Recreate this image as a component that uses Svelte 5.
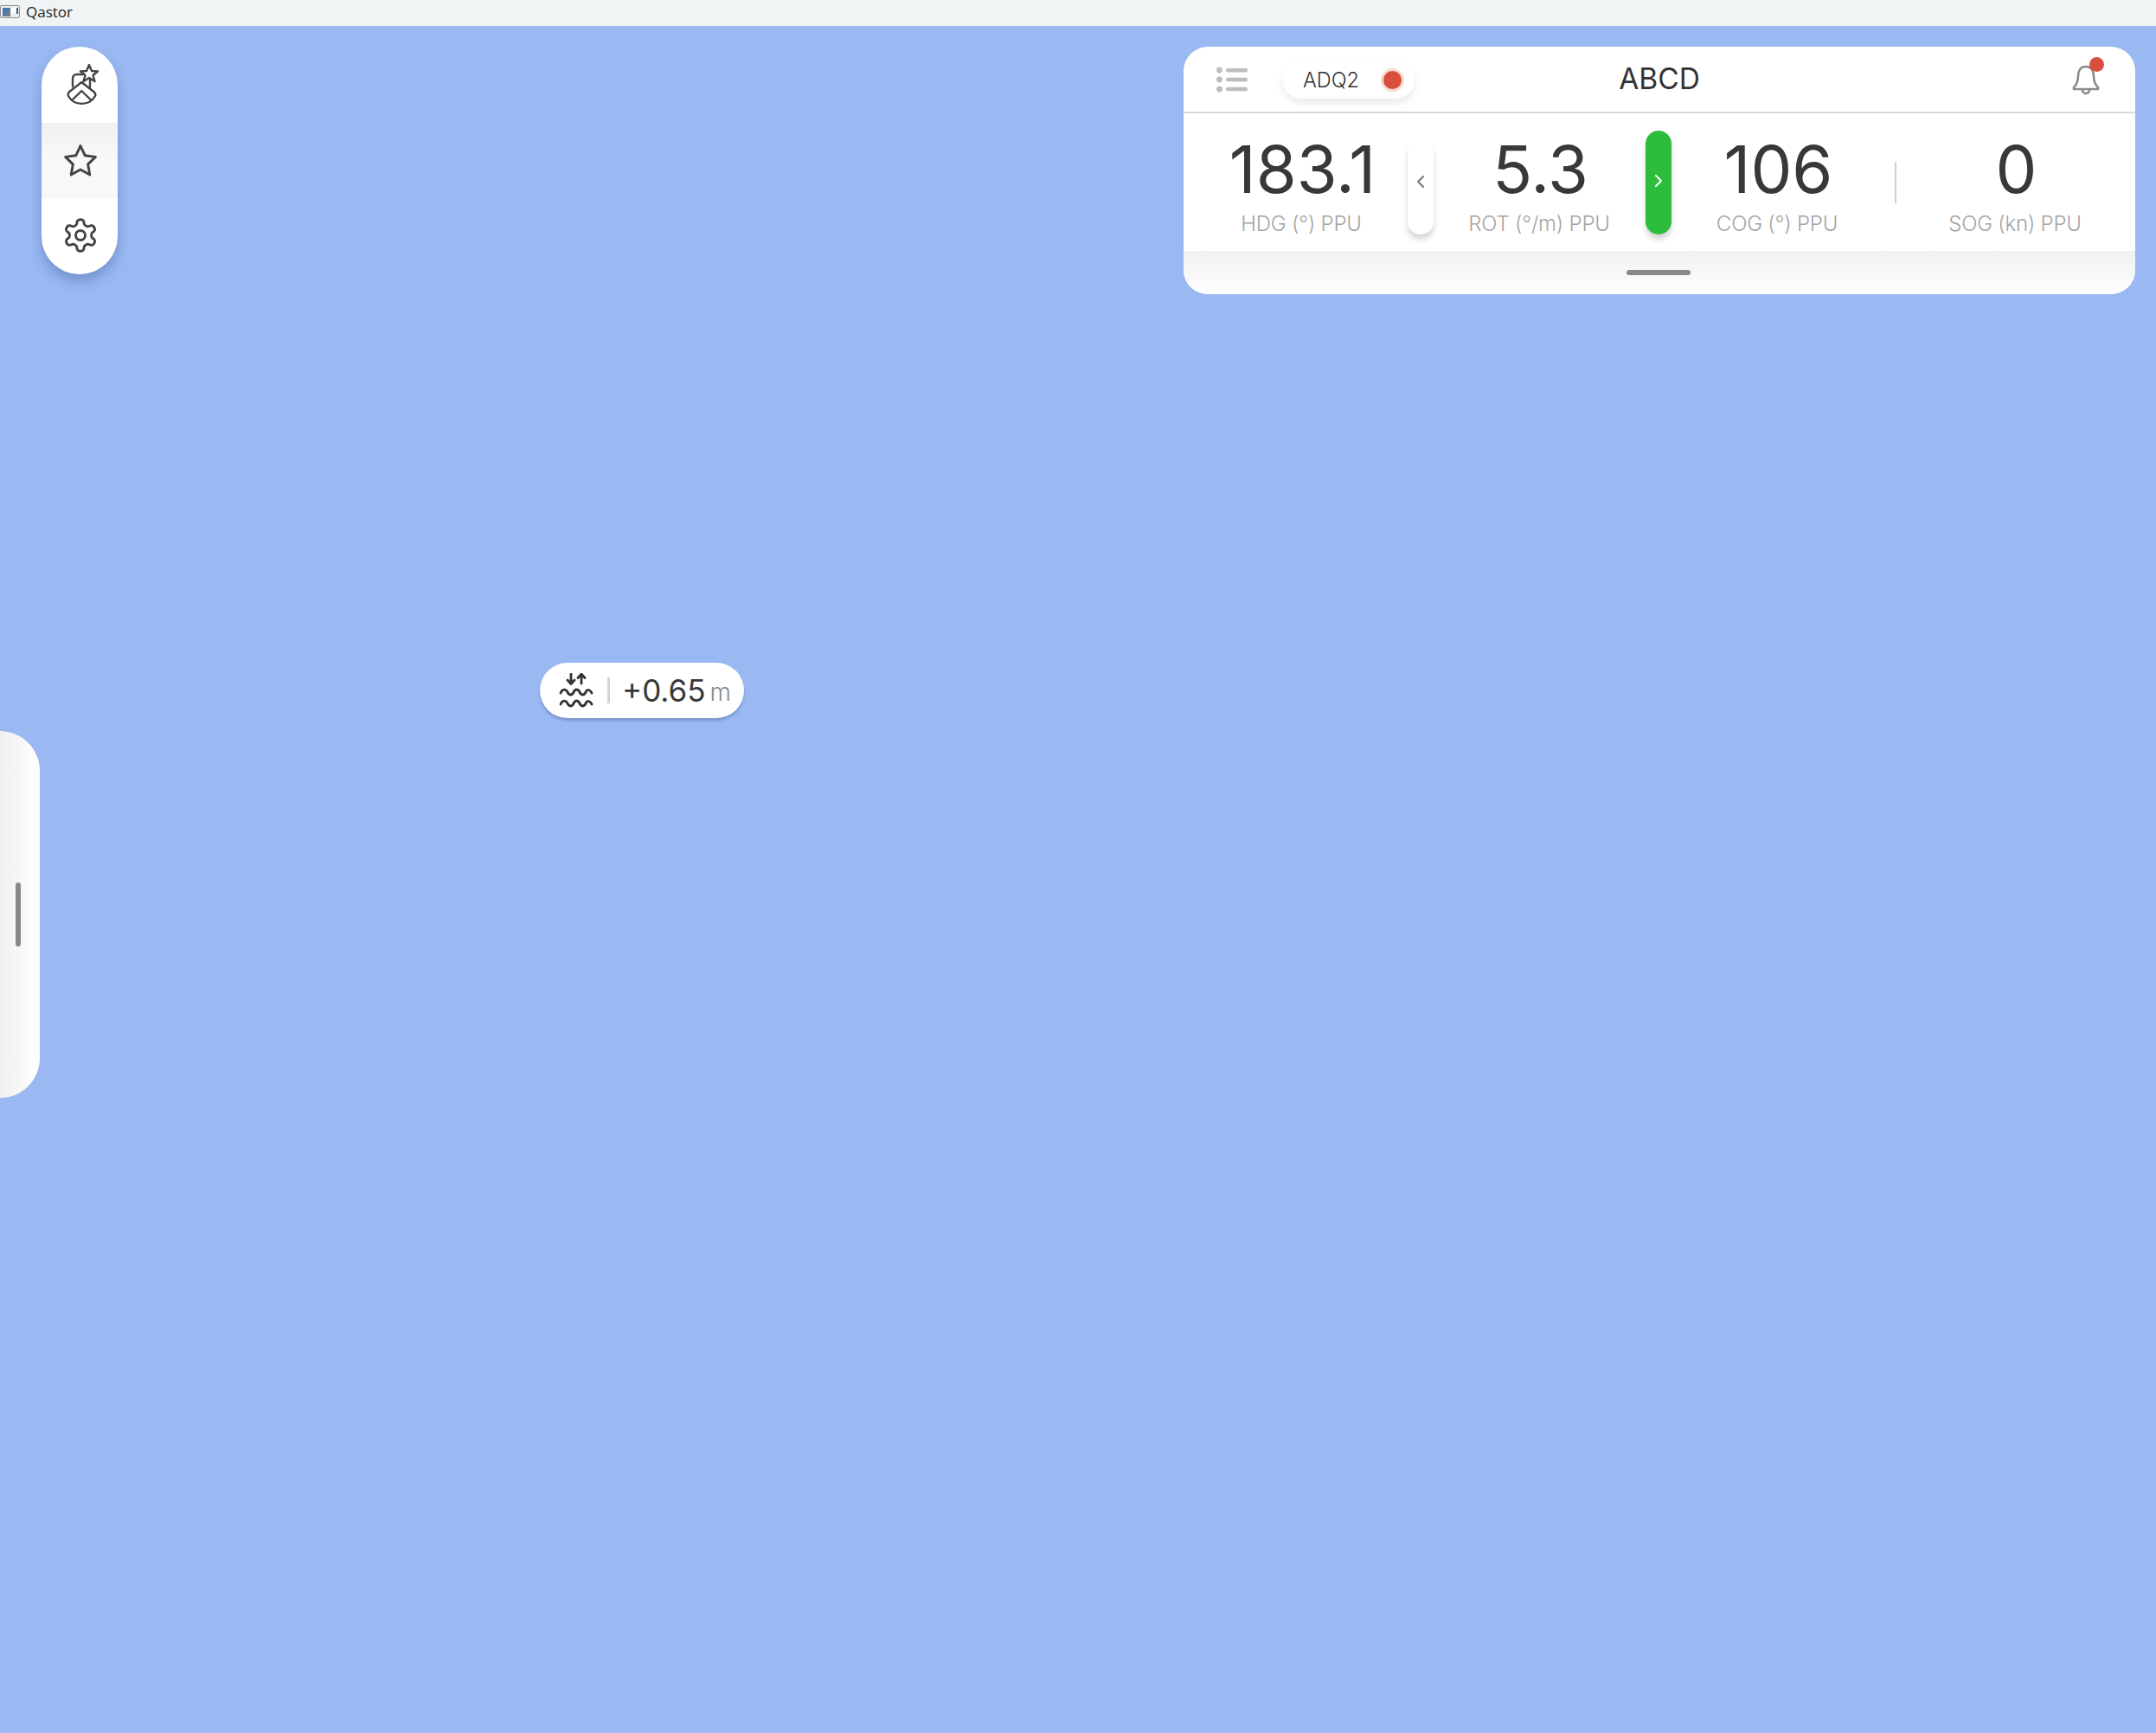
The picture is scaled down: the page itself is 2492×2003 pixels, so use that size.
<script>
  const metrics = [
    { value: '183.1', label: 'HDG (°) PPU', sep: 'left' },
    { value: '5.3', label: 'ROT (°/m) PPU', sep: 'right' },
    { value: '106', label: 'COG (°) PPU', sep: 'line' },
    { value: '0', label: 'SOG (kn) PPU', sep: null }
  ];
</script>

<div class="window">
  <header class="titlebar">
    <svg class="appicon" viewBox="0 0 23 15" width="23" height="15">
      <rect x="0.5" y="0.5" width="22" height="14" rx="1.5" fill="#eee" stroke="#8f8f8f" />
      <rect x="3" y="3" width="9" height="10" fill="#4a78a8" />
      <path d="M3 13 L12 5 V13 Z" fill="#6d7f8f" />
      <rect x="13" y="3" width="5" height="6" fill="#fff" />
      <rect x="19" y="3" width="2" height="7" fill="#445a78" />
    </svg>
    <span>Qastor</span>
  </header>

  <main class="stage">
    <nav class="rail">
      <button class="rail-item" aria-label="Ship">
        <svg viewBox="0 0 44 52" width="44" height="52" fill="none" stroke="#444" stroke-width="2.4" stroke-linejoin="round" stroke-linecap="round">
          <path d="M13 28 V19 Q13 14 18 14 H25" />
          <path d="M33 20 V29" />
          <path d="M23.3 23 L38 34.5 Q40 37 39 39 A18 18 0 0 1 8 39 Q7 37 8.6 34.5 Z" fill="#fff" />
          <path d="M13 43 L23.3 33 L33.5 43" />
          <path d="M32 3 L35 10 L42 10.5 L36.5 15 L38.5 22 L32 18 L25.5 22 L27.5 15 L22 10.5 L29 10 Z" fill="#fff" />
        </svg>
      </button>
      <button class="rail-item active" aria-label="Favourites">
        <svg viewBox="0 0 24 24" width="44" height="44" fill="none" stroke="#444" stroke-width="1.6" stroke-linejoin="round">
          <path d="M12 2.5 L14.9 8.6 L21.5 9.5 L16.7 14.1 L17.9 20.7 L12 17.5 L6.1 20.7 L7.3 14.1 L2.5 9.5 L9.1 8.6 Z" />
        </svg>
      </button>
      <button class="rail-item gear" aria-label="Settings">
        <svg viewBox="0 0 24 24" width="44" height="44" fill="none" stroke="#444" stroke-width="1.6" stroke-linecap="round" stroke-linejoin="round">
          <path d="M12.22 2h-.44a2 2 0 0 0-2 2v.18a2 2 0 0 1-1 1.73l-.43.25a2 2 0 0 1-2 0l-.15-.08a2 2 0 0 0-2.73.73l-.22.38a2 2 0 0 0 .73 2.73l.15.1a2 2 0 0 1 1 1.72v.51a2 2 0 0 1-1 1.74l-.15.09a2 2 0 0 0-.73 2.73l.22.38a2 2 0 0 0 2.73.73l.15-.08a2 2 0 0 1 2 0l.43.25a2 2 0 0 1 1 1.73V20a2 2 0 0 0 2 2h.44a2 2 0 0 0 2-2v-.18a2 2 0 0 1 1-1.73l.43-.25a2 2 0 0 1 2 0l.15.08a2 2 0 0 0 2.73-.73l.22-.39a2 2 0 0 0-.73-2.73l-.15-.08a2 2 0 0 1-1-1.74v-.5a2 2 0 0 1 1-1.74l.15-.09a2 2 0 0 0 .73-2.73l-.22-.38a2 2 0 0 0-2.73-.73l-.15.08a2 2 0 0 1-2 0l-.43-.25a2 2 0 0 1-1-1.73V4a2 2 0 0 0-2-2z" />
          <circle cx="12" cy="12" r="3" />
        </svg>
      </button>
    </nav>

    <aside class="drawer"><span class="drawer-handle"></span></aside>

    <div class="tide">
      <svg viewBox="0 0 40 40" width="40" height="40" fill="none" stroke="#333" stroke-width="2.8" stroke-linecap="round" stroke-linejoin="round">
        <path d="M14 1 V12 M10 8 L14 12.5 L18 8" />
        <path d="M26 12 V1 M22 5.5 L26 1 L30 5.5" />
        <path d="M2 23 C4 18 8 18 10 22 C12 26 15 26 17 22 C19 18 22 18 24 22 C26 26 29 26 31 22 C33 18 36 19 38 23" />
        <path d="M2 36 C4 31 8 31 10 35 C12 39 15 39 17 35 C19 31 22 31 24 35 C26 39 29 39 31 35 C33 31 36 32 38 36" />
      </svg>
      <span class="tide-sep"></span>
      <span class="tide-value">+0.65</span>
      <span class="tide-unit">m</span>
    </div>

    <section class="panel">
      <div class="panel-head">
        <svg class="menu" viewBox="0 0 36 30" width="36" height="30" fill="#bdbdbd">
          <circle cx="3.5" cy="4" r="3.4" /><circle cx="3.5" cy="15" r="3.4" /><circle cx="3.5" cy="26" r="3.4" />
          <rect x="11" y="2" width="25" height="4.5" rx="2" /><rect x="11" y="12.8" width="25" height="4.5" rx="2" /><rect x="11" y="23.8" width="25" height="4.5" rx="2" />
        </svg>
        <div class="adq">
          <span>ADQ2</span>
          <i class="rec"></i>
        </div>
        <h1>ABCD</h1>
        <div class="bell">
          <svg viewBox="0 0 32 36" width="32" height="36" fill="none" stroke="#8a8a8a" stroke-width="2.6" stroke-linejoin="round">
            <path d="M16 3 C9 3 7 9 7 14 C7 21 5 24 2 27 V29 H30 V27 C27 24 25 21 25 14 C25 9 23 3 16 3 Z" />
            <path d="M12 30 A4 4 0 0 0 20 30" />
          </svg>
          <i class="bell-dot"></i>
        </div>
      </div>

      <div class="panel-body">
        {#each metrics as m}
          <div class="metric">
            <div class="value">{m.value}</div>
            <div class="label">{m.label}</div>
            {#if m.sep === 'left'}
              <button class="pill" aria-label="Previous">
                <svg viewBox="0 0 10 16" width="10" height="16" fill="none" stroke="#777" stroke-width="2" stroke-linecap="round" stroke-linejoin="round"><path d="M8 2 L2 8 L8 14" /></svg>
              </button>
            {:else if m.sep === 'right'}
              <button class="pill green" aria-label="Next">
                <svg viewBox="0 0 10 16" width="10" height="16" fill="none" stroke="#fff" stroke-width="2" stroke-linecap="round" stroke-linejoin="round"><path d="M2 2 L8 8 L2 14" /></svg>
              </button>
            {:else if m.sep === 'line'}
              <span class="vline"></span>
            {/if}
          </div>
        {/each}
      </div>

      <div class="panel-foot"><span class="foot-handle"></span></div>
    </section>
  </main>
</div>

<style>
  :global(body) { margin: 0; background: #9ab8f1; }
  .window { width: 2492px; height: 2003px; display: flex; flex-direction: column; overflow: hidden; font-family: Inter, Roboto, "Liberation Sans", sans-serif; }
  .titlebar { height: 30px; flex: none; background: #f0f4f5; display: flex; align-items: center; gap: 7px; font: 17px "Open Sans", "Noto Sans", sans-serif; color: #222; }
  .titlebar span { margin-top: -4px; }
  .appicon { flex: none; margin-top: -4px; }
  .stage { position: relative; flex: 1; background: #9ab8f1; }

  button { border: 0; padding: 0; background: none; display: flex; align-items: center; justify-content: center; }

  .rail { position: absolute; left: 48px; top: 24px; width: 88px; height: 263px; display: flex; flex-direction: column; background: #fff; border-radius: 44px; overflow: hidden; box-shadow: 0 8px 14px rgba(60, 90, 150, 0.4); }
  .rail-item { flex: none; height: 87.67px; box-sizing: border-box; padding-left: 1px; }
  .rail-item.gear { padding-bottom: 2px; }
  .rail-item.active { background: linear-gradient(#f0f0f0, #f8f8f8 50%); padding-top: 2px; }

  .drawer { position: absolute; left: 0; top: 815px; width: 46px; height: 424px; display: flex; align-items: center; justify-content: flex-end; padding-right: 22px; box-sizing: border-box; background: linear-gradient(90deg, #f0f0f0, #fff); border-radius: 0 46px 46px 0; }
  .drawer-handle { width: 6px; height: 74px; border-radius: 3px; background: #888; }

  .tide { position: absolute; left: 624px; top: 736px; width: 236px; height: 64px; box-sizing: border-box; padding-left: 22px; display: flex; align-items: center; background: #fff; border-radius: 32px; box-shadow: 0 3px 3px rgba(60, 90, 150, 0.35); }
  .tide-sep { width: 3px; height: 30px; background: #d4d4d4; margin: 0 14px 0 16px; }
  .tide-value { font-size: 35px; color: #383838; font-weight: 400; }
  .tide-unit { font-size: 28px; color: #8a8a8a; margin-left: 5px; margin-top: 3px; font-weight: 300; }

  .panel { position: absolute; left: 1368px; top: 24px; width: 1100px; height: 286px; display: flex; flex-direction: column; background: #fff; border-radius: 28px; overflow: hidden; }
  .panel-head { height: 75px; flex: none; position: relative; display: flex; align-items: center; padding: 0 38px; border-bottom: 2px solid #d8d8d8; }
  .menu { flex: none; }
  .adq { margin-left: 40px; width: 153px; height: 44px; border-radius: 22px; display: flex; align-items: center; justify-content: space-between; box-sizing: border-box; padding: 2px 12px 0 24px; box-shadow: 0 5px 8px rgba(0, 0, 0, 0.09); font-size: 23.5px; font-weight: 300; color: #333; }
  .rec { width: 21px; height: 21px; border-radius: 50%; background: #d94f3d; border: 3px solid #f5dccc; }
  h1 { position: absolute; left: 0; right: 0; top: -2px; bottom: 0; margin: 0; display: flex; align-items: center; justify-content: center; font-size: 33.5px; font-weight: 400; color: #333; pointer-events: none; }
  .bell { margin-left: auto; position: relative; display: flex; margin-right: 3px; }
  .bell-dot { position: absolute; right: -5px; top: -8px; width: 17px; height: 17px; border-radius: 50%; background: #d94f3d; }

  .panel-body { height: 159px; flex: none; display: grid; grid-template-columns: repeat(4, 275px); }
  .metric { position: relative; display: flex; flex-direction: column; align-items: center; padding-top: 31px; box-sizing: border-box; }
  .value { font-size: 76px; line-height: 66px; color: #383838; font-weight: 400; }
  .label { font-size: 24px; line-height: 32px; letter-spacing: -0.2px; color: #a5a5a5; margin: 15px 3px 0 0; font-weight: 300; }
  .pill { position: absolute; right: -14px; top: 30px; width: 30px; height: 110px; border-radius: 15px; background: #fff; box-shadow: 0 6px 6px rgba(0, 0, 0, 0.16); padding-bottom: 12px; box-sizing: border-box; }
  .pill.green { top: 20px; height: 120px; background: #2dbd3d; padding-bottom: 4px; }
  .vline { position: absolute; right: 1.5px; top: 56px; width: 2px; height: 48px; background: #cfcfcf; }

  .panel-foot { flex: 1; display: flex; align-items: center; justify-content: center; padding-right: 3px; background: linear-gradient(#f0f0f0, #fff); }
  .foot-handle { width: 74px; height: 6px; border-radius: 3px; background: #888; }
</style>
